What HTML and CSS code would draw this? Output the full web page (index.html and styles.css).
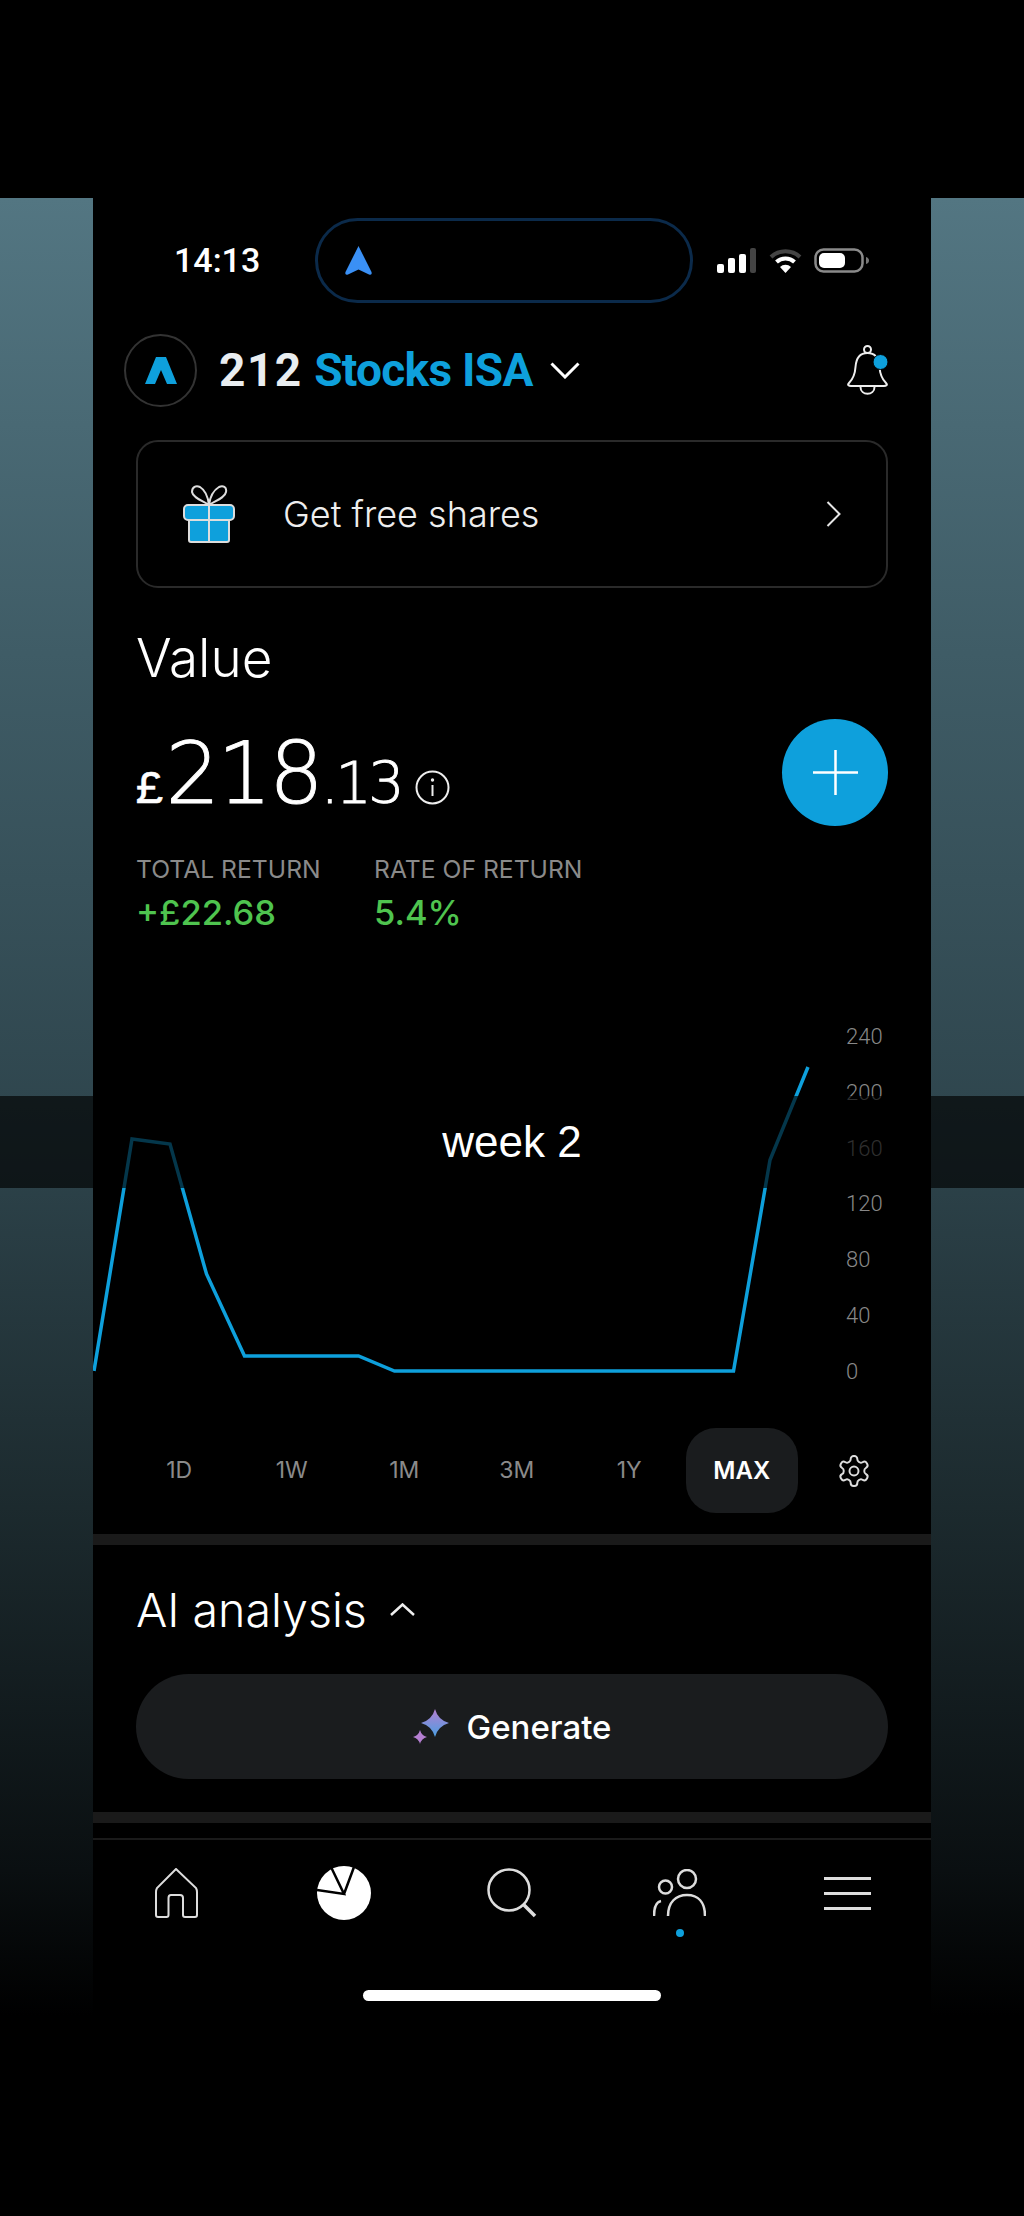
FILE: index.html
```html
<!DOCTYPE html>
<html lang="en">
<head>
<meta charset="utf-8">
<title>212 Stocks ISA</title>
<link rel="stylesheet" href="styles.css">
</head>
<body>
<main class="stage">
  <div class="phone">
    <header class="status">
      <span class="time">14:13</span>
      <div class="island">
        <svg class="island-arrow" viewBox="0 0 27 30"><path d="M13.5 0 L26.5 26 Q27.5 29.5 24 28.5 L13.5 23.5 L3 28.5 Q-.5 29.5 .5 26 Z" fill="#3a90f5"/></svg>
      </div>
      <div class="status-icons">
        <svg class="signal" viewBox="0 0 39 25"><rect x="0" y="16" width="7" height="9" rx="2" fill="#fff"/><rect x="11" y="10" width="7" height="15" rx="2" fill="#fff"/><rect x="22" y="6" width="7" height="19" rx="2" fill="#fff"/><rect x="33" y="0" width="6" height="25" rx="2" fill="#444"/></svg>
        <svg class="wifi" viewBox="0 0 33 25"><path d="M2 9 A21 21 0 0 1 31 9" fill="none" stroke="#444" stroke-width="4"/><path d="M7.500 14 A13 13 0 0 1 25.500 14" fill="none" stroke="#fff" stroke-width="4"/><path d="M16.500 25 L11 19 A8 8 0 0 1 22 19 Z" fill="#fff"/></svg>
        <svg class="battery" viewBox="0 0 56 25"><rect x="1.500" y="1.500" width="47" height="22" rx="8" fill="none" stroke="#8a8a8a" stroke-width="2.500"/><rect x="5" y="5" width="26" height="15" rx="5" fill="#fff"/><path d="M52 9 Q55 10 55 12.500 Q55 15 52 16 Z" fill="#777"/></svg>
      </div>
    </header>

    <div class="account">
      <div class="logo">
        <svg viewBox="0 0 32 27"><path d="M0 27 L11 0 H21 L32 27 H22 L16 13 L10 27 Z" fill="#0ea0dc"/></svg>
      </div>
      <h1 class="account-name"><span class="account-num">212</span> <span class="accent">Stocks ISA</span></h1>
      <svg class="chev-down" viewBox="0 0 30 17"><path d="M1.500 1.500 L15 15 L28.500 1.500" fill="none" stroke="#fff" stroke-width="3"/></svg>
      <svg class="bell" viewBox="0 0 41 51">
        <circle cx="20.500" cy="4.500" r="3.500" fill="none" stroke="#eee" stroke-width="2"/>
        <path d="M20.500 8 C11 8 9 15 8.500 22 C8 30 6 34 2 38 C0 40 2 41 4 41 H37 C39 41 41 40 39 38 C35 34 33 30 32.500 22 C32 15 30 8 20.500 8 Z" fill="none" stroke="#eee" stroke-width="2"/>
        <path d="M13.500 42 C13.500 51 27.500 51 27.500 42" fill="none" stroke="#eee" stroke-width="2"/>
        <circle cx="33.500" cy="17" r="7.500" fill="#0ea0dc" stroke="#000" stroke-width="1"/>
      </svg>
    </div>

    <a class="promo">
      <svg class="gift" viewBox="0 0 52 58">
        <path d="M26 20 C20 16 10 13 9 7 C9 2 13 0 17 2 C22 5 25 12 26 20 C27 12 31 5 36 2 C40 0 44 2 43 7 C42 13 32 16 26 20 Z" fill="none" stroke="#ddd" stroke-width="2"/>
        <rect x="6" y="33" width="40" height="24" rx="2" fill="#0ea0dc" stroke="#ddd" stroke-width="2"/>
        <rect x="1" y="20" width="50" height="15" rx="4" fill="#0ea0dc" stroke="#ddd" stroke-width="2"/>
        <path d="M26 20 V57" stroke="#ddd" stroke-width="2"/>
      </svg>
      <span class="promo-text">Get free shares</span>
      <svg class="chev-right" viewBox="0 0 15 26"><path d="M1.500 1 L13.500 13 L1.500 25" fill="none" stroke="#e5e5e5" stroke-width="2"/></svg>
    </a>

    <section class="value">
      <h2 class="value-title">Value</h2>
      <div class="value-row">
        <div class="amount">
          <span class="currency">£</span><span class="major">218</span><span class="minor">.13</span>
          <svg class="info" viewBox="0 0 35 35"><circle cx="17.500" cy="17.500" r="16" fill="none" stroke="#eee" stroke-width="2"/><circle cx="17.500" cy="10" r="1.700" fill="#eee"/><path d="M17.500 15 V26" stroke="#eee" stroke-width="2"/></svg>
        </div>
        <button class="add"><svg viewBox="0 0 45 45"><path d="M22.500 0 V45 M0 22.500 H45" stroke="#fff" stroke-width="2.500"/></svg></button>
      </div>
      <div class="returns">
        <div class="stat stat-total"><div class="stat-label">TOTAL RETURN</div><div class="stat-value">+£22.68</div></div>
        <div class="stat"><div class="stat-label">RATE OF RETURN</div><div class="stat-value">5.4%</div></div>
      </div>
    </section>

    <section class="chart">
      <svg class="plot" viewBox="0 0 753 391">
        <polyline points="1,362 39,130 77,135 113.500,265 151.500,347 265.500,347 301.500,362 640.500,362 677,151 715,58" fill="none" stroke="#0ea0dc" stroke-width="3.500"/>
      </svg>
      <div class="axis">
        <span>240</span><span>200</span><span>160</span><span>120</span><span>80</span><span>40</span><span>0</span>
      </div>
    </section>

    <nav class="ranges">
      <span class="range">1D</span>
      <span class="range">1W</span>
      <span class="range">1M</span>
      <span class="range">3M</span>
      <span class="range">1Y</span>
      <span class="range range-active">MAX</span>
      <svg class="gear" viewBox="0 0 24 24"><path d="M12.220 2h-.44a2 2 0 0 0-2 2v.18a2 2 0 0 1-1 1.730l-.43.25a2 2 0 0 1-2 0l-.15-.08a2 2 0 0 0-2.730.73l-.22.38a2 2 0 0 0 .73 2.730l.15.1a2 2 0 0 1 1 1.720v.51a2 2 0 0 1-1 1.740l-.15.09a2 2 0 0 0-.73 2.730l.22.38a2 2 0 0 0 2.730.73l.15-.08a2 2 0 0 1 2 0l.43.25a2 2 0 0 1 1 1.730V20a2 2 0 0 0 2 2h.44a2 2 0 0 0 2-2v-.18a2 2 0 0 1 1-1.730l.43-.25a2 2 0 0 1 2 0l.15.08a2 2 0 0 0 2.730-.73l.22-.39a2 2 0 0 0-.73-2.730l-.15-.08a2 2 0 0 1-1-1.740v-.5a2 2 0 0 1 1-1.740l.15-.09a2 2 0 0 0 .73-2.730l-.22-.38a2 2 0 0 0-2.730-.73l-.15.08a2 2 0 0 1-2 0l-.43-.25a2 2 0 0 1-1-1.730V4a2 2 0 0 0-2-2z" fill="none" stroke="#ddd" stroke-width="1.300"/><circle cx="12" cy="12" r="3" fill="none" stroke="#ddd" stroke-width="1.300"/></svg>
    </nav>

    <div class="divider divider-first"></div>

    <section class="analysis">
      <div class="analysis-head">
        <h2 class="analysis-title">AI analysis</h2>
        <svg class="chev-up" viewBox="0 0 25 13"><path d="M1 12 L12.500 1.500 L24 12" fill="none" stroke="#eee" stroke-width="2.500"/></svg>
      </div>
      <button class="generate">
        <svg class="sparkle" viewBox="0 0 36 35">
          <defs><linearGradient id="spark" x1="0" y1="0" x2="0" y2="1"><stop offset="0" stop-color="#b57fd2"/><stop offset="1" stop-color="#4a9fe2"/></linearGradient></defs>
          <path d="M22 0 Q25 11 36 14 Q25 17 22 28 Q19 17 8 14 Q19 11 22 0 Z" fill="url(#spark)"/>
          <path d="M7 21 Q8.500 26.500 14 28 Q8.500 29.500 7 35 Q5.500 29.500 0 28 Q5.500 26.500 7 21 Z" fill="#b57fd2"/>
        </svg>
        <span>Generate</span>
      </button>
    </section>

    <div class="divider divider-second"></div>

    <nav class="tabs">
      <a class="tab"><svg class="ico-home" viewBox="0 0 43 50"><path d="M21 1 L41 20 Q42 22 42 24 V47 Q42 49 40 49 H30 Q28 49 28 47 V30 Q28 27 25 27 H16 Q13.500 27 13.500 30 V47 Q13.500 49 11.500 49 H3 Q1 49 1 47 V24 Q1 22 2 20 Z" fill="none" stroke="#ddd" stroke-width="2"/></svg></a>
      <a class="tab"><svg class="ico-pie" viewBox="0 0 54 54"><circle cx="27" cy="27" r="27" fill="#fff"/><path d="M0 24 L27 28 L14 1 M27 28 L37 1" fill="none" stroke="#000" stroke-width="2.500"/></svg></a>
      <a class="tab"><svg class="ico-search" viewBox="0 0 50 50"><circle cx="22" cy="22" r="20.500" fill="none" stroke="#ddd" stroke-width="2.500"/><path d="M37 37 L48 48" stroke="#ddd" stroke-width="3.500"/></svg></a>
      <a class="tab tab-people"><svg class="ico-people" viewBox="0 0 53 48"><circle cx="34" cy="10" r="9" fill="none" stroke="#ddd" stroke-width="2.500"/><circle cx="12.500" cy="18" r="6.500" fill="none" stroke="#ddd" stroke-width="2.500"/><path d="M15 47 C15 33 23 26 34 26 C45 26 52 33 52 47" fill="none" stroke="#ddd" stroke-width="2.500"/><path d="M1 47 C1 38 3 33 8 32" fill="none" stroke="#ddd" stroke-width="2.500"/></svg><i class="tab-dot"></i></a>
      <a class="tab"><svg class="ico-menu" viewBox="0 0 47 33"><path d="M0 1.500 H47 M0 16.500 H47 M0 31.500 H47" stroke="#ddd" stroke-width="3"/></svg></a>
    </nav>

    <div class="home-indicator"></div>
  </div>

  <div class="band"><span class="band-text">week 2</span></div>
</main>
</body>
</html>
```

FILE: styles.css
```css
* { box-sizing: border-box; }
html, body { margin: 0; padding: 0; background: #000; }
body { height: 2216px; overflow: hidden; font-family: "Inter", "Liberation Sans", sans-serif; color: #fff; }
h1, h2 { margin: 0; font-weight: inherit; }
svg { display: block; flex: none; }

.stage {
  position: relative;
  margin-top: 198px;
  height: 1818px;
  background: linear-gradient(180deg, #537682 0%, #3f5c66 25%, #2f464e 50%, #1c2a2e 72%, #0a0f11 92%, #000 100%);
}
.phone { width: 838px; height: 100%; margin: 0 auto; background: #000; }

.band {
  position: absolute;
  left: 0; right: 0;
  top: 898px;
  height: 92px;
  background: rgba(0, 0, 0, .66);
  display: flex;
  align-items: center;
  justify-content: center;
}
.band-text { font-family: "Liberation Sans", sans-serif; font-size: 44px; line-height: 1; }

/* status bar */
.status { display: flex; padding: 20px 61px 0 81px; height: 105px; }
.time { font-family: "Roboto", sans-serif; font-size: 34px; font-weight: 500; line-height: 85px; width: 141px; }
.island { width: 379px; height: 85px; border: 3px solid #0b2a4a; border-radius: 43px; display: flex; align-items: center; padding-left: 27px; }
.island-arrow { width: 27px; height: 30px; }
.status-icons { display: flex; align-items: center; margin-left: 24px; height: 85px; }
.signal { width: 39px; height: 25px; }
.wifi { width: 33px; height: 25px; margin-left: 13px; }
.battery { width: 56px; height: 25px; margin-left: 12px; }

/* account row */
.account { display: flex; align-items: center; margin-top: 31px; padding: 0 43px 0 31px; height: 73px; }
.logo { width: 73px; height: 73px; border: 2px solid #333; border-radius: 50%; display: flex; align-items: center; justify-content: center; }
.logo svg { width: 32px; height: 27px; }
.account-name { margin-left: 22px; font-family: "Roboto", sans-serif; font-weight: 700; font-size: 46px; line-height: 73px; color: #e9edf0; white-space: nowrap; }
.account-num { letter-spacing: 1.5px; }
.accent { color: #0ea0dc; letter-spacing: -.7px; }
.chev-down { width: 30px; height: 17px; margin-left: 17px; }
.bell { width: 41px; height: 51px; margin-left: auto; }

/* promo */
.promo { display: flex; align-items: center; margin: 33px 43px 0; height: 148px; padding: 0 45px 0 45px; border: 2px solid #2a2a2a; border-radius: 22px; }
.gift { width: 52px; height: 58px; }
.promo-text { margin-left: 48px; font-size: 36px; font-weight: 300; color: #eee; }
.chev-right { width: 15px; height: 26px; margin-left: auto; }

/* value */
.value { padding: 0 43px; }
.value-title { margin-top: 37px; font-size: 53px; font-weight: 300; line-height: 66px; }
.value-row { display: flex; align-items: center; justify-content: space-between; margin-top: 28px; }
.amount { display: flex; align-items: baseline; font-family: "DejaVu Sans", sans-serif; font-weight: 200; -webkit-text-stroke: .9px #fff; }
.currency { font-size: 46px; font-family: "Liberation Mono", monospace; font-weight: 400; margin-right: 2px; -webkit-text-stroke: .6px #fff; }
.major { font-size: 86px; letter-spacing: -3px; }
.minor { font-size: 57px; letter-spacing: -3.5px; }
.info { width: 35px; height: 35px; margin-left: 14px; align-self: flex-end; margin-bottom: 18px; }
.add { width: 106px; height: 107px; border: 0; padding: 0; border-radius: 50%; background: #0ea0dc; display: flex; align-items: center; justify-content: center; }
.add svg { width: 45px; height: 45px; }
.returns { display: flex; margin-top: 28px; }
.stat-total { width: 238px; }
.stat-label { font-size: 24.7px; line-height: 30px; color: #8a8a8a; }
.stat-value { margin-top: 8px; font-size: 34.5px; font-weight: 500; line-height: 42px; color: #4fc44f; }

/* chart */
.chart { display: flex; margin-top: 75px; }
.plot { width: 753px; height: 391px; }
.axis { display: flex; flex-direction: column; }
.axis span { height: 55.8px; line-height: 55.8px; font-family: "Roboto", sans-serif; font-size: 22px; font-weight: 300; color: #888; }

/* ranges */
.ranges { display: flex; align-items: center; margin-top: 28px; padding-left: 30px; height: 85px; }
.range { width: 112.5px; height: 85px; line-height: 85px; text-align: center; font-size: 23px; color: #8a8a8a; border-radius: 30px; }
.range-active { color: #fff; font-weight: 600; font-size: 24px; background: #1a1c1e; }
.gear { width: 36px; height: 36px; margin-left: 38px; }

/* dividers */
.divider { height: 11px; background: #1a1a1a; }
.divider-first { margin-top: 21px; }

/* analysis */
.analysis { padding: 0 43px; height: 267px; }
.analysis-head { display: flex; align-items: center; height: 129px; }
.analysis-title { font-size: 46.5px; font-weight: 300; }
.chev-up { width: 25px; height: 13px; margin-left: 23px; }
.generate { width: 100%; height: 105px; border: 0; border-radius: 53px; background: #1a1c1e; color: #fff; display: flex; align-items: center; justify-content: center; font-family: inherit; font-size: 33px; font-weight: 500; }
.sparkle { width: 36px; height: 35px; margin-right: 18px; }

/* tabs */
.tabs { display: grid; grid-template-columns: repeat(5, 1fr); margin-top: 15px; border-top: 2px solid #1a1a1a; padding-top: 26px; }
.tab { position: relative; display: flex; align-items: center; justify-content: center; height: 54px; }
.ico-home { width: 43px; height: 50px; }
.ico-pie { width: 54px; height: 54px; }
.ico-search { width: 50px; height: 50px; }
.ico-people { width: 53px; height: 48px; }
.ico-menu { width: 47px; height: 33px; }
.tab-dot { position: absolute; left: 50%; top: 63px; width: 8px; height: 8px; margin-left: -4px; border-radius: 50%; background: #0ea0dc; }
.home-indicator { width: 298px; height: 11px; margin: 70px auto 0; border-radius: 6px; background: #fff; }
```
